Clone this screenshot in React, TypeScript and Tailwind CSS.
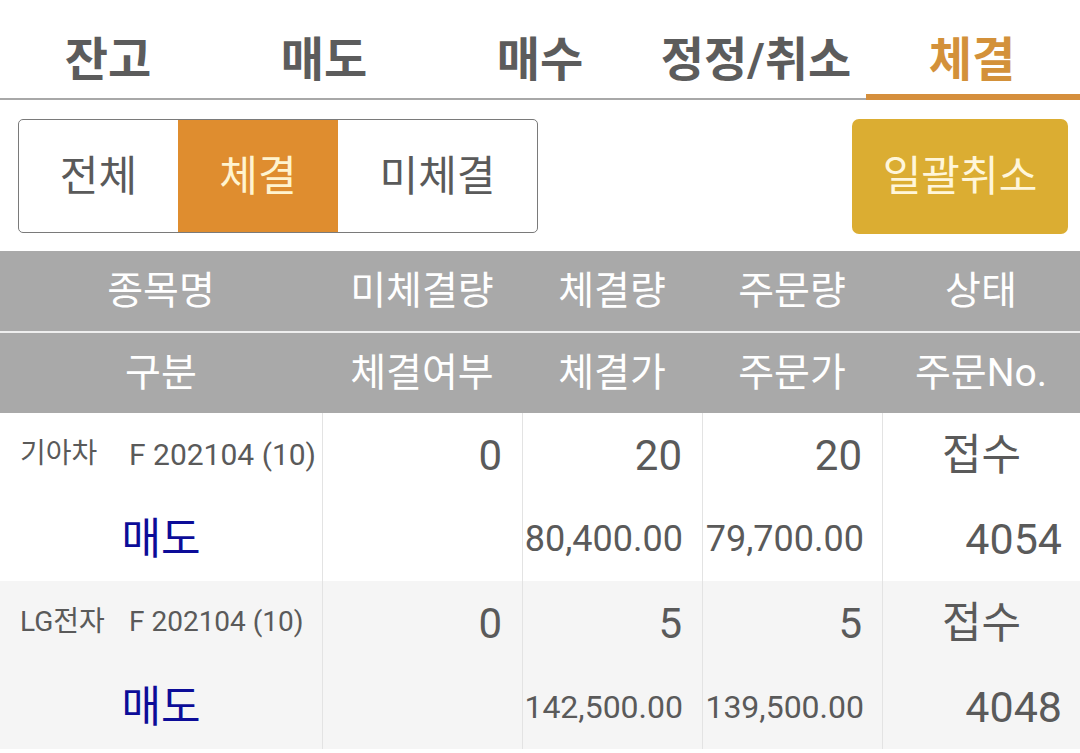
const font = "font-['Roboto','Noto_Sans_CJK_KR',sans-serif]";

const tabs = ["잔고", "매도", "매수", "정정/취소", "체결"];

interface OrderRow {
  name: string;
  code: string;
  side: string;
  unfilled: string;
  filledQty: string;
  orderQty: string;
  status: string;
  filledPrice: string;
  orderPrice: string;
  orderNo: string;
  // prices shrink to fit the column, like the app does
  priceSize: string;
  codeSize: string;
}

const rows: OrderRow[] = [
  {
    name: "기아차",
    code: "F 202104 (10)",
    side: "매도",
    unfilled: "0",
    filledQty: "20",
    orderQty: "20",
    status: "접수",
    filledPrice: "80,400.00",
    orderPrice: "79,700.00",
    orderNo: "4054",
    priceSize: "text-[36px]",
    codeSize: "text-[30px]",
  },
  {
    name: "LG전자",
    code: "F 202104 (10)",
    side: "매도",
    unfilled: "0",
    filledQty: "5",
    orderQty: "5",
    status: "접수",
    filledPrice: "142,500.00",
    orderPrice: "139,500.00",
    orderNo: "4048",
    priceSize: "text-[32px]",
    codeSize: "text-[28px]",
  },
];

const cols = "grid grid-cols-[322px_200px_180px_180px_198px]";
const cell = "grid grid-rows-2 grid-cols-1 min-w-0 border-l border-[#e3e3e3]";

export default function App() {
  return (
    <div className={`w-[1080px] h-[753px] bg-white overflow-hidden ${font}`}>
      {/* top tabs */}
      <div className="grid grid-cols-5 h-[100px] border-b-2 border-[#a8a8a8]">
        {tabs.map((t, i) => {
          const active = i === tabs.length - 1;
          return (
            <div key={t} className="relative flex items-center justify-center pt-[20px]">
              <span
                className={
                  active
                    ? "text-[47px] font-bold text-[#d3913a] leading-none"
                    : "text-[47px] font-bold text-[#5c5c5c] leading-none"
                }
              >
                {t}
              </span>
              {active && (
                <div className="absolute left-[2px] right-0 bottom-[-2px] h-[6px] bg-[#d58f3c]" />
              )}
            </div>
          );
        })}
      </div>

      {/* filter + bulk cancel */}
      <div className="flex items-start mt-[19px] pl-[18px] pr-[12px]">
        <div className="flex w-[520px] h-[114px] border border-[#7a7a7a] rounded-[5px] overflow-hidden">
          <div className="w-[159px] flex items-center justify-center text-[42px] text-[#5a5a5a]">
            전체
          </div>
          <div className="w-[160px] flex items-center justify-center text-[42px] text-[#fff4cf] bg-[#df8d2f]">
            체결
          </div>
          <div className="flex-1 flex items-center justify-center text-[42px] text-[#5a5a5a]">
            미체결
          </div>
        </div>
        <button className="ml-auto w-[216px] h-[115px] rounded-[7px] bg-[#dbad32] text-[42px] text-[#fff6da] flex items-center justify-center">
          일괄취소
        </button>
      </div>

      {/* table header */}
      <div className="mt-[17px] bg-[#a9a9a9] text-white text-[39px]">
        <div className={`${cols} h-[80px] items-center text-center`}>
          <div>종목명</div>
          <div>미체결량</div>
          <div>체결량</div>
          <div>주문량</div>
          <div>상태</div>
        </div>
        <div className="h-[2px] bg-[#eeeeee]" />
        <div className={`${cols} h-[80px] items-center text-center`}>
          <div>구분</div>
          <div>체결여부</div>
          <div>체결가</div>
          <div>주문가</div>
          <div>주문No.</div>
        </div>
      </div>

      {/* rows */}
      {rows.map((r, idx) => (
        <div
          key={r.name}
          className={`${cols} h-[168px] text-[#5a5a5a] ${idx % 2 === 1 ? "bg-[#f5f5f5]" : "bg-white"}`}
        >
          <div className="grid grid-rows-2 grid-cols-1 min-w-0">
            <div className="flex items-center pl-[20px] pb-[2px] whitespace-nowrap">
              <span className="w-[109px] text-[28px]">{r.name}</span>
              <span className={r.codeSize}>{r.code}</span>
            </div>
            <div className="flex items-center justify-center text-[43px] text-[#0c0c98]">
              {r.side}
            </div>
          </div>
          <div className={cell}>
            <div className="flex items-center justify-end pr-[20px] text-[42px]">{r.unfilled}</div>
            <div />
          </div>
          <div className={cell}>
            <div className="flex items-center justify-end pr-[20px] text-[42px]">{r.filledQty}</div>
            <div className={`flex items-center justify-end pr-[19px] whitespace-nowrap ${r.priceSize}`}>
              {r.filledPrice}
            </div>
          </div>
          <div className={cell}>
            <div className="flex items-center justify-end pr-[20px] text-[42px]">{r.orderQty}</div>
            <div className={`flex items-center justify-end pr-[18px] whitespace-nowrap ${r.priceSize}`}>
              {r.orderPrice}
            </div>
          </div>
          <div className={cell}>
            <div className="flex items-center justify-center text-[43px]">{r.status}</div>
            <div className="flex items-center justify-end pr-[18px] text-[43px]">{r.orderNo}</div>
          </div>
        </div>
      ))}
    </div>
  );
}
